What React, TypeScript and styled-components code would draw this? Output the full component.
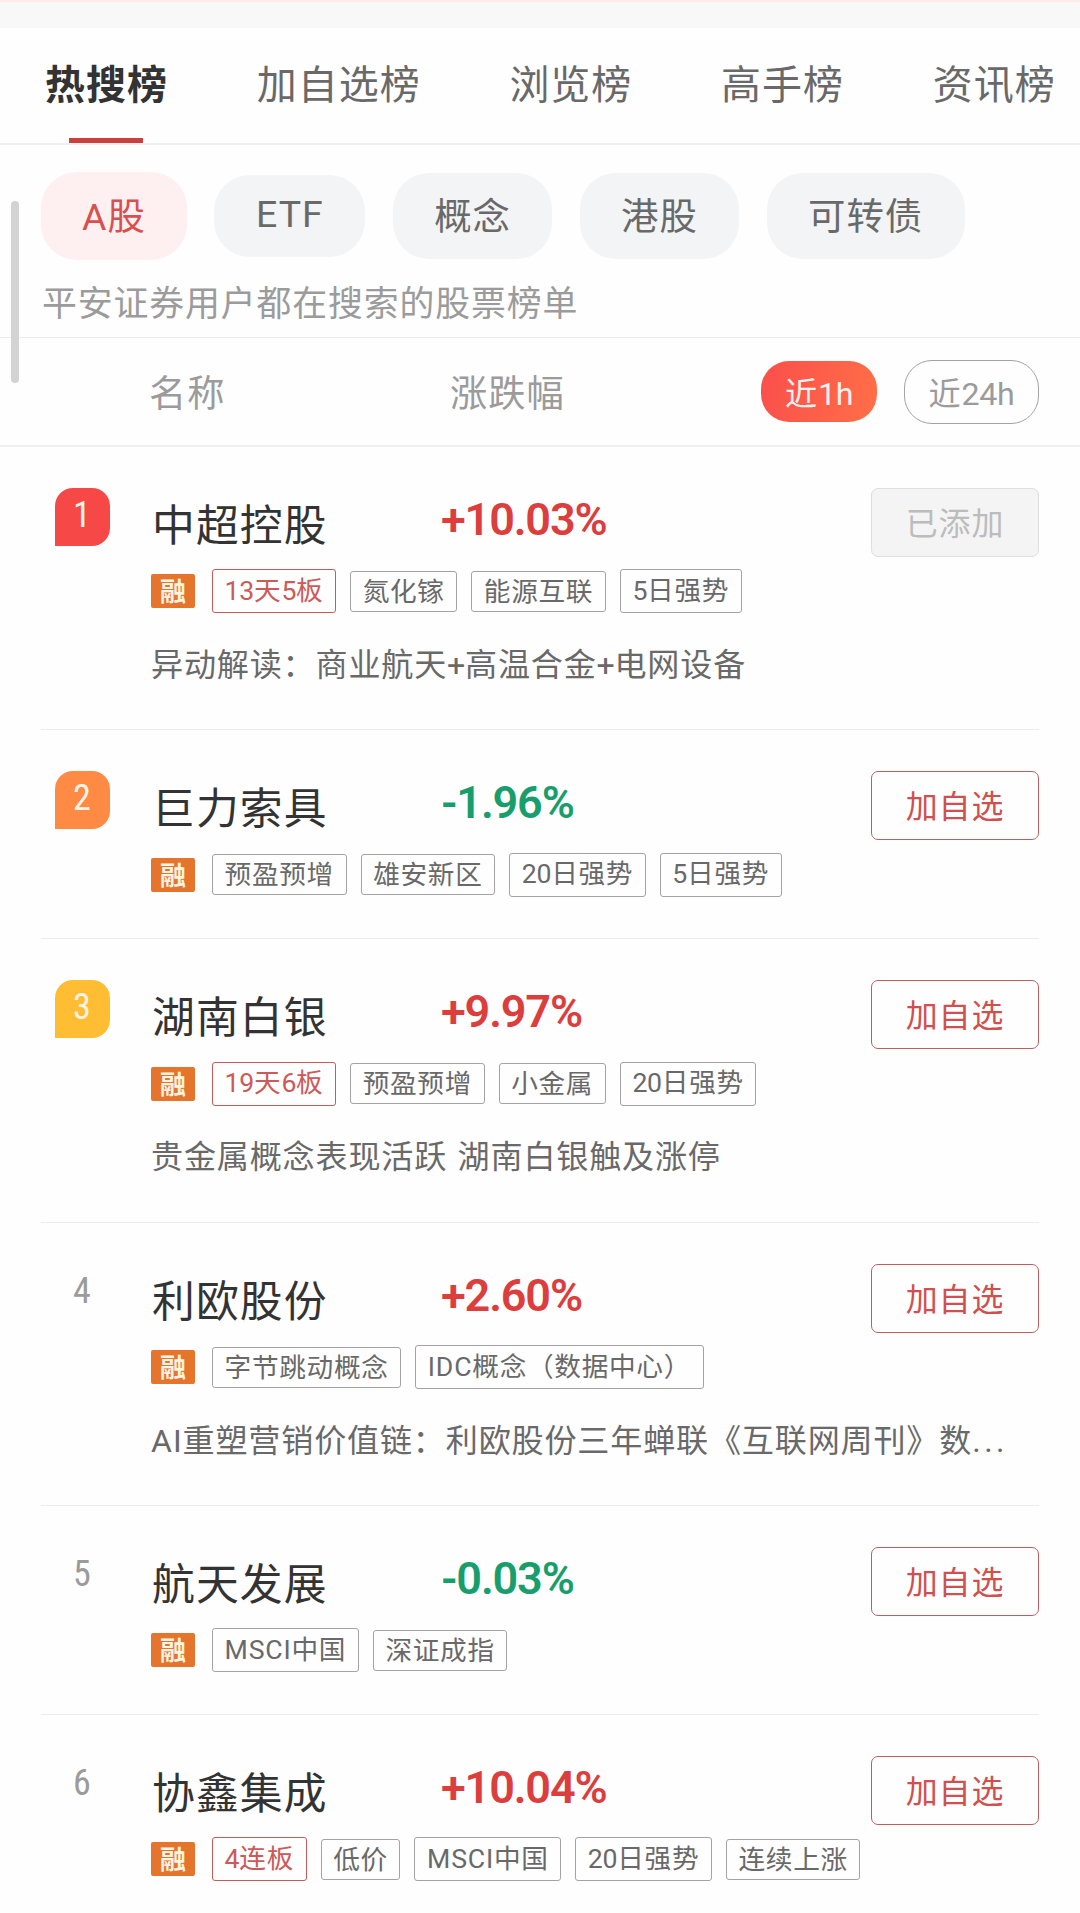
import React from 'react';
import styled, { createGlobalStyle, css } from 'styled-components';

const CJK = '"Noto Sans CJK SC", "Noto Sans", sans-serif';
const LATIN = 'Roboto, "Noto Sans CJK SC", sans-serif';

/* Sets Chinese text so that each character advances by exactly \`advance\` px. */
const hanzi = (advance: number) => css`
  font-size: ${(advance * 0.975).toFixed(2)}px;
  letter-spacing: ${(advance * 0.025).toFixed(2)}px;
`;

const GlobalStyle = createGlobalStyle`
  * { box-sizing: border-box; }
  html, body { margin: 0; padding: 0; background: #fefefe; }
  body { font-family: ${CJK}; color: #333; overflow: hidden; }
  button { font: inherit; background: none; border: 0; padding: 0; margin: 0; }
`;

const Page = styled.div`
  position: relative;
  width: 1080px;
  height: 1913px;
  overflow: hidden;
  background: #fefefe;
  display: flex;
  flex-direction: column;
`;

const TopStrip = styled.div`
  flex: none;
  height: 28px;
  background: #f8f8f8;
  border-top: 2px solid #fdebe6;
`;

const Tabs = styled.nav`
  flex: none;
  display: flex;
  gap: 88.7px;
  height: 117px;
  padding: 0 0 0 45px;
  border-bottom: 2px solid #f0f0f0;
`;

const Tab = styled.button<{ $active?: boolean }>`
  flex: none;
  display: flex;
  flex-direction: column;
  align-items: center;
  justify-content: space-between;
  padding-top: 33px;
  ${hanzi(41)}
  line-height: 42px;
  white-space: nowrap;
  font-weight: ${p => (p.$active ? 700 : 400)};
  color: ${p => (p.$active ? '#333' : '#696969')};
`;

const TabLine = styled.span`
  width: 74px;
  height: 5px;
  margin-right: 2px;
  background: #cb3f3f;
`;

const Filters = styled.div`
  flex: none;
  display: flex;
  align-items: center;
  gap: 27.4px;
  height: 142px;
  padding-left: 41px;
`;

const Chip = styled.button<{ $kind: 'active' | 'latin' | 'normal' }>`
  flex: none;
  display: flex;
  align-items: center;
  justify-content: center;
  width: ${p => (p.$kind === 'active' ? '146px' : p.$kind === 'latin' ? '151px' : 'auto')};
  height: ${p => (p.$kind === 'active' ? 88 : p.$kind === 'latin' ? 82 : 86)}px;
  padding: 0 ${p => (p.$kind === 'normal' ? 41.4 : 0)}px ${p => (p.$kind === 'latin' ? 11 : 4)}px;
  border-radius: 36px;
  ${hanzi(38.4)}
  line-height: 44px;
  white-space: nowrap;
  background: ${p => (p.$kind === 'active' ? '#feeff0' : '#f2f4f6')};
  color: ${p => (p.$kind === 'active' ? '#d84f4f' : '#696969')};
`;

const Hint = styled.p`
  flex: none;
  margin: -8px 0 0;
  height: 59px;
  padding: 2px 0 0 42px;
  ${hanzi(35.75)}
  line-height: 40px;
  color: #9b9b9b;
  border-bottom: 1px solid #ececec;
`;

const TableHead = styled.div`
  flex: none;
  display: grid;
  grid-template-columns: 301px 311px auto 135px;
  align-items: center;
  height: 109px;
  padding: 0 41px 0 149px;
  border-bottom: 2px solid #f0f0f0;
  ${hanzi(38.2)}
  line-height: 44px;
  color: #9b9b9b;
`;

const HeadCell = styled.span`
  padding-bottom: 2px;
`;

const Period = styled.button<{ $active?: boolean }>`
  display: flex;
  align-items: center;
  justify-content: center;
  width: ${p => (p.$active ? 116 : 135)}px;
  height: ${p => (p.$active ? 61 : 64)}px;
  padding-bottom: 2px;
  border-radius: 28px;
  ${hanzi(33)}
  line-height: 40px;
  white-space: nowrap;
  border: ${p => (p.$active ? '0' : '1px solid #a2a2a2')};
  background: ${p => (p.$active ? 'linear-gradient(100deg, #fa4f4b, #ff6f47)' : 'transparent')};
  color: ${p => (p.$active ? '#fff0ee' : '#9b9b9b')};
`;

const List = styled.ol`
  list-style: none;
  margin: 0;
  padding: 0 41px;
`;

const Row = styled.li<{ $tall: boolean }>`
  display: grid;
  grid-template-columns: 109px minmax(0, 1fr);
  height: ${p => (p.$tall ? 283.4 : 209)}px;
  padding-top: 41px;
  border-bottom: 1px solid #ececec;
`;

const RankBadge = styled.span<{ $color?: string }>`
  display: flex;
  align-items: center;
  justify-content: center;
  width: 55px;
  height: 58px;
  margin-left: 14px;
  padding: 0 1px 4px 0;
  border-radius: 18px 18px 18px 0;
  background: ${p => p.$color || 'transparent'};
  color: ${p => (p.$color ? '#fff3e6' : '#9b9b9b')};
  font: 400 36px/40px ${LATIN};
  font-stretch: 80%;
`;

const Body = styled.div`
  min-width: 0;
  display: flex;
  flex-direction: column;
`;

const TopLine = styled.div`
  display: grid;
  grid-template-columns: 291px 1fr 168px;
  height: 69px;
`;

const Name = styled.span`
  padding-top: 11px;
  padding-left: 2px;
  ${hanzi(43.9)}
  line-height: 46px;
  white-space: nowrap;
  color: #333;
`;

const Change = styled.span<{ $up: boolean }>`
  padding-top: 9px;
  font: 600 45px/46px ${LATIN};
  letter-spacing: -1.15px;
  color: ${p => (p.$up ? '#dc3d3d' : '#189e6c')};
`;

const AddButton = styled.button<{ $added?: boolean }>`
  display: flex;
  align-items: center;
  justify-content: center;
  height: 69px;
  padding-bottom: 3px;
  border-radius: 7px;
  border: 1.5px solid ${p => (p.$added ? '#dedede' : '#bb5f5f')};
  background: ${p => (p.$added ? '#f4f4f4' : 'transparent')};
  color: ${p => (p.$added ? '#bcbcbc' : '#d0504f')};
  ${hanzi(32.8)}
  line-height: 40px;
`;

const Tags = styled.div`
  display: flex;
  align-items: center;
  gap: 14px;
  height: 44px;
  margin-top: 12.3px;
  padding-left: 1px;
`;

const MarginTag = styled.span`
  flex: none;
  width: 44px;
  height: 34px;
  margin-right: 3px;
  border-radius: 2px;
  background: #e5742c;
  color: #fff4e2;
  font-size: 26px;
  font-weight: 700;
  line-height: 31px;
  text-align: center;
`;

const TagBox = styled.span<{ $mixed: boolean; $hot: boolean }>`
  flex: none;
  display: flex;
  align-items: center;
  height: ${p => (p.$mixed ? 44 : 41)}px;
  padding: 0 11.6px ${p => (p.$mixed ? 5 : 3)}px;
  border: 1px solid ${p => (p.$hot ? '#c95a5a' : '#a3a3a3')};
  border-radius: 3px;
  color: ${p => (p.$hot ? '#cc5a59' : '#696969')};
  ${hanzi(27.35)}
  line-height: 36px;
  white-space: nowrap;
`;

const Desc = styled.p`
  margin: 26.5px 0 0;
  padding-left: 1px;
  ${hanzi(32.9)}
  line-height: 44px;
  word-spacing: 2.5px;
  white-space: nowrap;
  color: #696969;
`;

const latinSpacing = { digits: -0.01, letters: 0.03, dots: 0.11 };

const Latin = styled.span<{ $kind: keyof typeof latinSpacing }>`
  font-family: ${LATIN};
  font-weight: 370;
  letter-spacing: ${p => latinSpacing[p.$kind]}em;
  line-height: 0;
`;

const ScrollThumb = styled.div`
  position: absolute;
  left: 11px;
  top: 201px;
  width: 8px;
  height: 182px;
  border-radius: 4px;
  background: #d3d3d3;
`;

function Mixed({ text }: { text: string }) {
  const parts = text.split(/([A-Za-z0-9+.]+)/).filter(Boolean);
  return (
    <span>
      {parts.map((part, i) =>
        /^[A-Za-z0-9+.]/.test(part) ? (
          <Latin key={i} $kind={part === '...' ? 'dots' : /[0-9+]/.test(part) ? 'digits' : 'letters'}>
            {part}
          </Latin>
        ) : (
          part
        )
      )}
    </span>
  );
}

function Tag({ text, hot }: { text: string; hot: boolean }) {
  return (
    <TagBox $mixed={/[A-Za-z0-9]/.test(text)} $hot={hot}>
      <Mixed text={text} />
    </TagBox>
  );
}

type Stock = {
  name: string;
  change: string;
  added?: boolean;
  hot?: string;
  tags: string[];
  desc?: string;
};

const tabs = ['热搜榜', '加自选榜', '浏览榜', '高手榜', '资讯榜'];
const rankColors = ['#f74848', '#ff8a43', '#ffbd34'];

const stocks: Stock[] = [
  { name: '中超控股', change: '+10.03%', added: true, hot: '13天5板', tags: ['氮化镓', '能源互联', '5日强势'], desc: '异动解读：商业航天+高温合金+电网设备' },
  { name: '巨力索具', change: '-1.96%', tags: ['预盈预增', '雄安新区', '20日强势', '5日强势'] },
  { name: '湖南白银', change: '+9.97%', hot: '19天6板', tags: ['预盈预增', '小金属', '20日强势'], desc: '贵金属概念表现活跃 湖南白银触及涨停' },
  { name: '利欧股份', change: '+2.60%', tags: ['字节跳动概念', 'IDC概念（数据中心）'], desc: 'AI重塑营销价值链：利欧股份三年蝉联《互联网周刊》数...' },
  { name: '航天发展', change: '-0.03%', tags: ['MSCI中国', '深证成指'] },
  { name: '协鑫集成', change: '+10.04%', hot: '4连板', tags: ['低价', 'MSCI中国', '20日强势', '连续上涨'] },
];

export default function App() {
  return (
    <Page>
      <GlobalStyle />
      <TopStrip />
      <Tabs>
        {tabs.map((tab, i) => (
          <Tab key={tab} $active={i === 0}>
            {tab}
            {i === 0 && <TabLine />}
          </Tab>
        ))}
      </Tabs>
      <Filters>
        <Chip $kind="active"><Mixed text="A股" /></Chip>
        <Chip $kind="latin"><Mixed text="ETF" /></Chip>
        <Chip $kind="normal">概念</Chip>
        <Chip $kind="normal">港股</Chip>
        <Chip $kind="normal">可转债</Chip>
      </Filters>
      <Hint>平安证券用户都在搜索的股票榜单</Hint>
      <TableHead>
        <HeadCell>名称</HeadCell>
        <HeadCell>涨跌幅</HeadCell>
        <Period $active><Mixed text="近1h" /></Period>
        <Period><Mixed text="近24h" /></Period>
      </TableHead>
      <List>
        {stocks.map((s, i) => (
          <Row key={s.name} $tall={Boolean(s.desc)}>
            <RankBadge $color={rankColors[i]}>{i + 1}</RankBadge>
            <Body>
              <TopLine>
                <Name>{s.name}</Name>
                <Change $up={s.change[0] === '+'}>{s.change}</Change>
                <AddButton $added={s.added}>{s.added ? '已添加' : '加自选'}</AddButton>
              </TopLine>
              <Tags>
                <MarginTag>融</MarginTag>
                {s.hot && <Tag text={s.hot} hot />}
                {s.tags.map(t => <Tag key={t} text={t} hot={false} />)}
              </Tags>
              {s.desc && <Desc><Mixed text={s.desc} /></Desc>}
            </Body>
          </Row>
        ))}
      </List>
      <ScrollThumb />
    </Page>
  );
}
